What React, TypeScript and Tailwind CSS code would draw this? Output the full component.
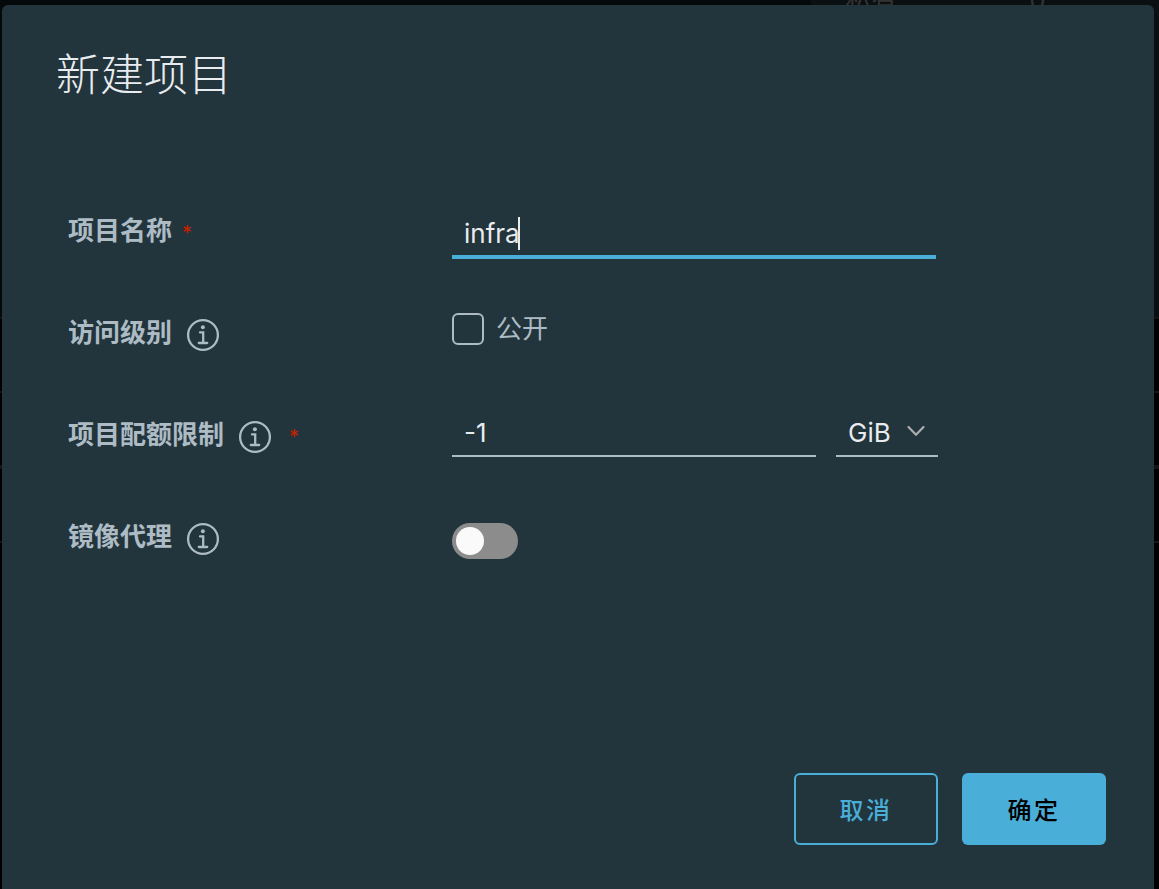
import type { ReactNode } from "react";

function InfoIcon() {
  return (
    <svg viewBox="0 0 36 36" className="size-9 fill-[#adbbc4]">
      <circle cx="18" cy="18" r="14.9" fill="none" stroke="#adbbc4" strokeWidth="2.3" />
      <circle cx="17.9" cy="10.3" r="2" />
      <path
        d="M15 15.4h3.2V26M13.8 26h8.4"
        fill="none"
        stroke="#adbbc4"
        strokeWidth="2.3"
        strokeLinecap="round"
      />
    </svg>
  );
}

type RowProps = {
  id: string;
  label: string;
  info?: boolean;
  required?: boolean;
  children: ReactNode;
};

function FormRow({ id, label, info, required, children }: RowProps) {
  return (
    <div className="flex h-[102px]">
      <div className="flex items-start w-96 shrink-0">
        <label htmlFor={id} className="pt-0.5 font-bold leading-9">
          {label}
        </label>
        {info && (
          <button type="button" aria-label={`${label}说明`} className="ml-[13px] mt-1">
            <InfoIcon />
          </button>
        )}
        {required && (
          <span
            className={
              info
                ? "ml-4 text-xl leading-[44px] text-[#c92100]"
                : "ml-2.5 text-xl leading-[44px] text-[#c92100]"
            }
          >
            *
          </span>
        )}
      </div>
      <div className="flex items-start">{children}</div>
    </div>
  );
}

function Backdrop() {
  return (
    <div className="absolute inset-0 flex flex-col bg-black" aria-hidden="true">
      <div className="h-[317px] flex">
        <div className="w-[70%] bg-[#05090c]" />
        <div className="grow flex gap-[132px] pl-[34px] bg-[#0a0f12] text-[#333333] leading-[0px]">
          <span>私有</span>
          <span>0</span>
        </div>
      </div>
      <div className="h-[74px] border-t-2 border-[#141414]" />
      <div className="h-[74px] border-t-2 border-[#141414]" />
      <div className="h-[76px] border-t-4 border-[#141414]" />
      <div className="grow border-t-2 border-[#141414]" />
    </div>
  );
}

export default function App() {
  return (
    <div className="relative min-h-screen overflow-hidden text-[26px] font-['Inter','Noto_Sans_CJK_SC',sans-serif]">
      <Backdrop />
      <div
        role="dialog"
        aria-labelledby="title"
        className="relative ml-0.5 mr-[5px] mt-[5px] min-h-[calc(100vh-5px)] rounded-t-md bg-[#22343c] text-[#adbbc4] flex flex-col px-12 pt-9 pb-11"
      >
        <h1 id="title" className="px-1.5 text-[44px] leading-[68px] font-light text-[#e9ecef]">
          新建项目
        </h1>
        <form className="grow flex flex-col justify-between">
          <div className="mt-[102px] px-[18px]">
            <FormRow id="name" label="项目名称" required>
              <div className="relative">
                <input
                  id="name"
                  type="text"
                  defaultValue="infra"
                  className="w-[484px] h-12 px-3 border-b-4 border-[#49afd9] text-[#e9ecef] caret-transparent outline-none"
                />
                <span className="absolute left-[66px] top-1.5 w-0.5 h-[33px] bg-[#e9ecef]" />
              </div>
            </FormRow>
            <FormRow id="public" label="访问级别" info>
              <input
                id="public"
                type="checkbox"
                className="appearance-none size-8 border-2 border-[#adbbc4] rounded-md"
              />
              <label htmlFor="public" className="ml-3 leading-8">
                公开
              </label>
            </FormRow>
            <FormRow id="quota" label="项目配额限制" info required>
              <input
                id="quota"
                type="text"
                defaultValue="-1"
                className="w-[364px] h-11 -mt-0.5 px-3 pb-1 border-b-2 border-[#adbbc4] text-[#e9ecef] outline-none"
              />
              <div className="relative ml-5 -mt-0.5">
                <select
                  aria-label="单位"
                  className="appearance-none w-[102px] h-11 px-3 pb-1 border-b-2 border-[#adbbc4] text-[#e9ecef] outline-none"
                >
                  <option>GiB</option>
                  <option>MiB</option>
                  <option>TiB</option>
                </select>
                <svg
                  viewBox="0 0 20 12"
                  className="absolute right-3 top-3 w-5 h-3 pointer-events-none"
                  fill="none"
                  stroke="#adadad"
                  strokeWidth="2.2"
                  strokeLinecap="round"
                  strokeLinejoin="round"
                >
                  <path d="M2.5 2 10 9.8 17.5 2" />
                </svg>
              </div>
            </FormRow>
            <FormRow id="proxy" label="镜像代理" info>
              <input
                id="proxy"
                type="checkbox"
                role="switch"
                className="appearance-none mt-1.5 w-[66px] h-9 p-1 rounded-full bg-[#8c8c8c] before:block before:size-7 before:rounded-full before:bg-[#fafafa] checked:before:ml-[30px]"
              />
            </FormRow>
          </div>
          <div className="flex justify-end gap-6 text-2xl font-medium">
            <button
              type="button"
              className="w-36 h-[72px] pt-1 rounded-md border-2 border-[#49afd9] text-[#49afd9] tracking-widest"
            >
              取消
            </button>
            <button
              type="submit"
              className="w-36 h-[72px] pt-1 rounded-md bg-[#49afd9] text-black tracking-widest"
            >
              确定
            </button>
          </div>
        </form>
      </div>
    </div>
  );
}
